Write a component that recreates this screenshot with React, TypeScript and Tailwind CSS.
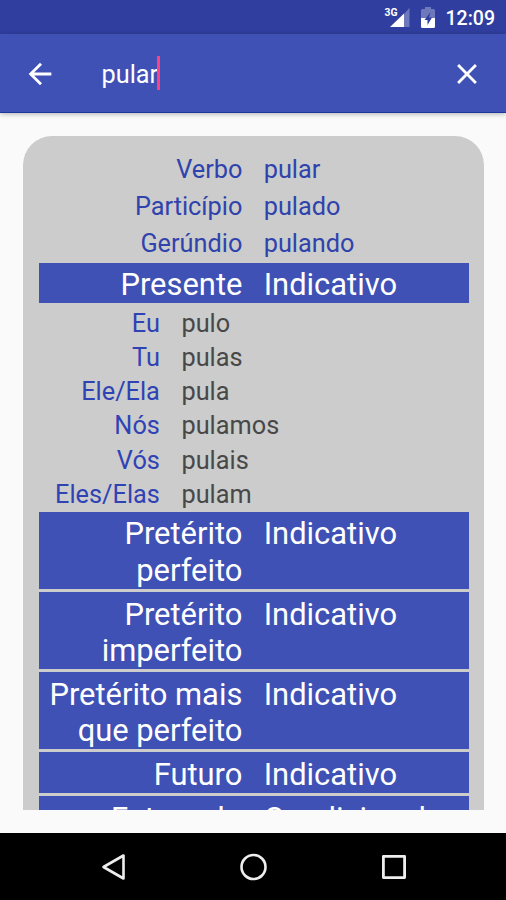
import { useState } from "react";

const forms = [
  { label: "Verbo", value: "pular" },
  { label: "Particípio", value: "pulado" },
  { label: "Gerúndio", value: "pulando" },
];

const presente = [
  { person: "Eu", form: "pulo" },
  { person: "Tu", form: "pulas" },
  { person: "Ele/Ela", form: "pula" },
  { person: "Nós", form: "pulamos" },
  { person: "Vós", form: "pulais" },
  { person: "Eles/Elas", form: "pulam" },
];

const tenses = [
  { name: "Pretérito perfeito", mood: "Indicativo" },
  { name: "Pretérito imperfeito", mood: "Indicativo" },
  { name: "Pretérito mais que perfeito", mood: "Indicativo" },
  { name: "Futuro", mood: "Indicativo" },
  { name: "Futuro do pretérito", mood: "Condicional" },
];

const StatusBar = () => (
  <div className="h-[34px] shrink-0 bg-[#303f9f] flex items-start justify-end pr-[11px] text-white">
    <svg width="26" height="22" viewBox="0 0 26 22" className="mt-[6px]">
      <text x="0.500" y="10" fontSize="10.5" fontWeight="700" fill="white" textLength="13" lengthAdjust="spacingAndGlyphs">3G</text>
      <path d="M25.500 2V21H20V8Z" fill="white" fillOpacity="0.3" />
      <path d="M20 7.500V21H6Z" fill="white" />
    </svg>
    <svg width="14" height="21" viewBox="0 0 14 21" className="mt-[7px] ml-[11px]">
      <path d="M4 0H10V2H12.500Q14 2 14 3.500V11H0V3.500Q0 2 1.500 2H4Z" fill="white" fillOpacity="0.3" />
      <path d="M0 11H14V19.500Q14 21 12.500 21H1.500Q0 21 0 19.500Z" fill="white" />
      <path d="M9.500 5L3.500 13H6.500V18L11 10.500H8Z" fill="#303f9f" />
    </svg>
    <span className="ml-[11px] mt-[7px] text-[19.500px] leading-6 font-medium">12:09</span>
  </div>
);

const TenseBand = ({ name, mood }: { name: string; mood: string }) => (
  <div className="flex shrink-0 bg-[#3f51b5] text-white text-[30.900px] leading-[36.200px] pt-[4.500px]">
    <div className="w-[203.800px] shrink-0 text-right">{name}</div>
    <div className="ml-[21.300px]">{mood}</div>
  </div>
);

const App = () => {
  const [query, setQuery] = useState("pular");

  return (
    <div className="w-[506px] h-[900px] flex flex-col overflow-hidden bg-[#fafafa] font-['Roboto',sans-serif]">
      <StatusBar />

      {/* Search toolbar */}
      <div className="h-[79px] shrink-0 bg-[#3f51b5] border-b border-[#1d36a0] shadow-[0_1px_5px_rgba(0,0,0,0.3)] flex items-center pl-[23px] pr-[22px]">
        <button>
          <svg width="34" height="34" viewBox="0 0 24 24" fill="white" className="mt-px">
            <path d="M20 11H7.830l5.590-5.590L12 4l-8 8 8 8 1.410-1.410L7.830 13H20v-2z" />
          </svg>
        </button>
        <div className="ml-[44.500px] flex-1 flex items-center">
          <span className="text-white text-[25.300px] leading-8 pt-[4px]">{query}</span>
          <span className="w-[3px] h-[34px] -ml-px bg-[#ff4081]"></span>
        </div>
        <button onClick={() => setQuery("")}>
          <svg width="34" height="34" viewBox="0 0 24 24" fill="white" className="mt-px">
            <path d="M19 6.410L17.590 5 12 10.590 6.410 5 5 6.410 10.590 12 5 17.590 6.410 19 12 13.410 17.590 19 19 17.590 13.410 12z" />
          </svg>
        </button>
      </div>

      {/* Conjugation card, cut off by the scroll area */}
      <div className="flex-1 min-h-0 pt-[22.500px] pb-[23px] pl-[23.200px] pr-[22px]">
        <div className="h-full overflow-hidden rounded-t-[29px] bg-[#cccccc] pt-[15.500px] pl-[15.400px] pr-[15px]">
          <div className="text-[25.300px] text-[#3043ac] pb-[0.500px]">
            {forms.map((f) => (
              <div key={f.label} className="flex h-[37px] leading-[37px]">
                <div className="w-[203.800px] text-right">{f.label}</div>
                <div className="ml-[21.300px]">{f.value}</div>
              </div>
            ))}
          </div>

          <TenseBand name="Presente" mood="Indicativo" />

          <div className="text-[25.300px] pt-[4px] pb-[0.200px]">
            {presente.map((p) => (
              <div key={p.person} className="flex h-[34.100px] leading-[34.100px]">
                <div className="w-[121.300px] text-right text-[#3043b4]">{p.person}</div>
                <div className="ml-[21.600px] text-[#484848]">{p.form}</div>
              </div>
            ))}
          </div>

          <div className="flex flex-col gap-[3.200px]">
            {tenses.map((t) => (
              <TenseBand key={t.name} name={t.name} mood={t.mood} />
            ))}
          </div>
        </div>
      </div>

      {/* Android navigation keys */}
      <div className="h-[67px] shrink-0 bg-black flex items-center justify-between pl-[101px] pr-[99px]">
        <svg width="25" height="28" viewBox="0 0 25 28" fill="none" stroke="#eeeeee" strokeWidth="2.600" strokeLinejoin="round">
          <path d="M22.500 2.500V25.500L2.500 14Z" />
        </svg>
        <svg width="28" height="28" viewBox="0 0 28 28" fill="none" stroke="#eeeeee" strokeWidth="2.600">
          <circle cx="13.500" cy="14" r="12" />
        </svg>
        <svg width="26" height="26" viewBox="0 0 26 26" fill="none" stroke="#eeeeee" strokeWidth="2.800" strokeLinejoin="round">
          <rect x="2.400" y="2.400" width="21.200" height="21.200" />
        </svg>
      </div>
    </div>
  );
};

export default App;
